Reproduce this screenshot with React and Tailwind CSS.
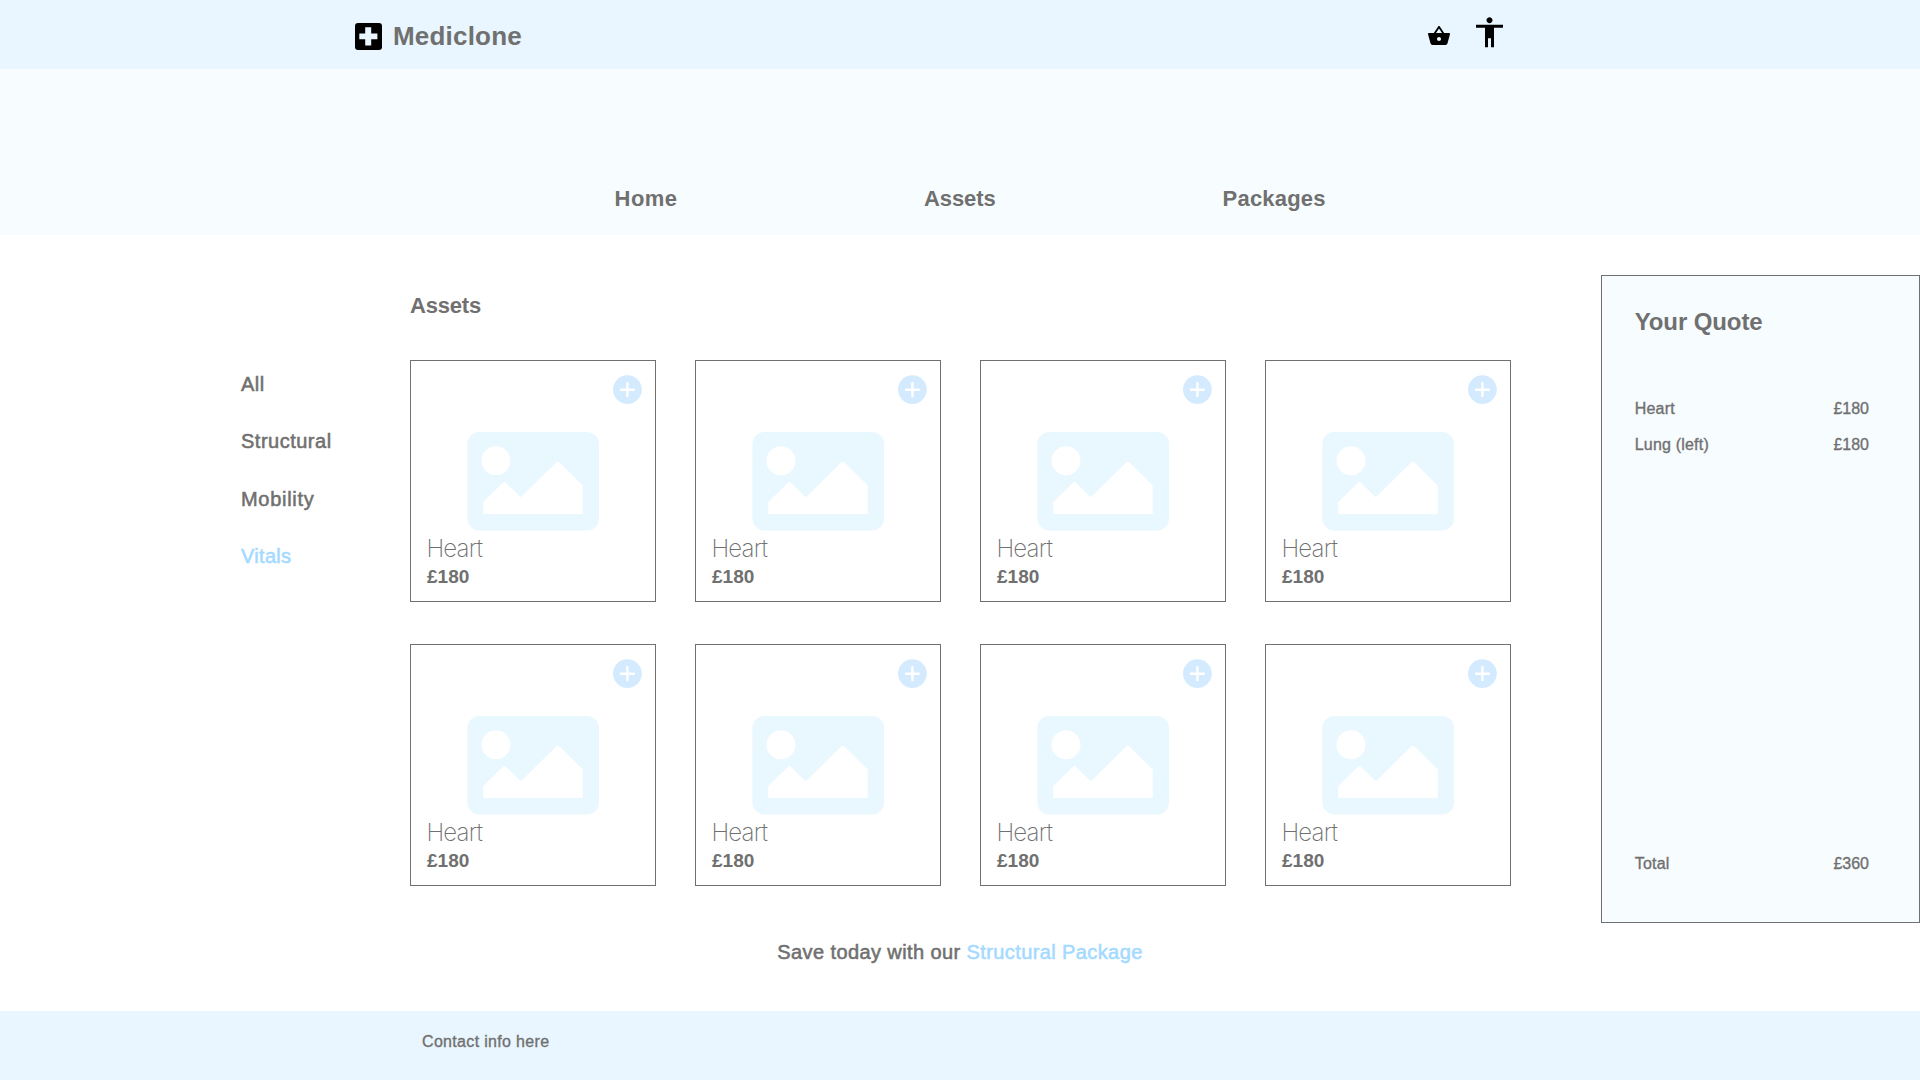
const categories = [
  { label: "All" },
  { label: "Structural" },
  { label: "Mobility", className: "tracking-[0.7px]" },
  { label: "Vitals", className: "tracking-[0.3px] text-[#a4daff]" },
];
const assets = Array.from({ length: 8 }, (_, id) => ({ id, name: "Heart", price: "£180" }));
const quote = [
  { name: "Heart", price: "£180" },
  { name: "Lung (left)", price: "£180" },
];

function LogoIcon() {
  return (
    <svg className="h-[27px] w-[27px]" viewBox="0 0 27 27">
      <rect width="27" height="27" rx="3" fill="#000" />
      <path d="M10.2 4.3h6v6.3h6.2v5.6h-6.2v6.3h-6v-6.3H4.3v-5.6h5.9z" fill="#e9f6ff" />
    </svg>
  );
}

function BasketIcon() {
  return (
    <svg className="h-6 w-6" viewBox="0 0 24 24">
      <path d="M17.21 9l-4.38-6.56c-.19-.28-.51-.42-.83-.42-.32 0-.64.14-.83.43L6.79 9H2c-.55 0-1 .45-1 1 0 .09.01.18.04.27l2.54 9.27c.23.84 1 1.46 1.92 1.46h13c.92 0 1.69-.62 1.93-1.46l2.54-9.27L23 10c0-.55-.45-1-1-1h-4.79zM9 9l3-4.4L15 9H9zm3 8c-1.1 0-2-.9-2-2s.9-2 2-2 2 .9 2 2-.9 2-2 2z" />
    </svg>
  );
}

function PersonIcon() {
  return (
    <svg className="h-9 w-9" viewBox="0 0 24 24">
      <path
        transform="translate(-0.33 0.2)"
        d="M12 2c1.1 0 2 .9 2 2s-.9 2-2 2-2-.9-2-2 .9-2 2-2zm9 7h-6v13h-2v-6h-2v6H9V9H3V7h18v2z"
      />
    </svg>
  );
}

function PictureIcon() {
  return (
    <svg className="mt-[71px] ml-14 h-[99px] w-[132px]" viewBox="0 0 132 99">
      <rect x="0.4" y="0" width="131.6" height="98.6" rx="12" fill="#e9f7ff" />
      <circle cx="29" cy="28.8" r="14.5" fill="#fff" />
      <path
        d="M16.2 82V70L35.7 50.9Q37.4 49.3 39.1 50.9L53.8 65.3L89.1 30.6Q90.8 29 92.5 30.6L115.7 53.5V82Z"
        fill="#fff"
      />
    </svg>
  );
}

function AddButton() {
  return (
    <button className="absolute top-3.5 right-3" aria-label="Add">
      <svg className="h-[30px] w-[30px]" viewBox="0 0 30 30">
        <circle cx="14.4" cy="14.6" r="14.4" fill="#d4ebff" />
        <path d="M14.4 8.3v12.8M8 14.7h12.8" stroke="#fff" strokeWidth="2.4" strokeLinecap="round" />
      </svg>
    </button>
  );
}

function AssetCard({ name, price }) {
  return (
    <article className="relative h-[242px] w-[246px] border border-[#707070] bg-white">
      <AddButton />
      <PictureIcon />
      <h3 className="mt-1 pl-[15.4px] font-['Inter','Liberation_Sans',sans-serif] text-[24px] leading-[28px] font-extralight tracking-[-0.8px]">
        {name}
      </h3>
      <p className="mt-[3px] pl-4 text-[19px] leading-[22px] font-bold">{price}</p>
    </article>
  );
}

function QuoteLine({ name, price }) {
  return (
    <div className="flex justify-between text-[16px] leading-9 [-webkit-text-stroke:0.35px]">
      <span className="tracking-[0.2px]">{name}</span>
      <span>{price}</span>
    </div>
  );
}

export default function App() {
  return (
    <div className="flex h-[1080px] w-[1920px] flex-col overflow-hidden bg-white font-['Liberation_Sans',Arial,sans-serif] text-[#707070]">
      <header className="flex h-[69px] items-center bg-[#e9f6ff] pt-[3px] pl-[355px]">
        <LogoIcon />
        <span className="ml-[11px] w-[1034px] text-[26px] leading-[30px] font-bold tracking-[0.2px]">Mediclone</span>
        <div className="flex items-center gap-[21px] pb-2 text-black">
          <span className="pt-2">
            <BasketIcon />
          </span>
          <PersonIcon />
        </div>
      </header>

      <nav className="flex h-[166px] items-end bg-[#f7fcff] pb-[23px] pl-[614.6px] text-[22px] leading-[26px] font-bold">
        <a className="w-[309.4px] tracking-[0.4px]">Home</a>
        <a className="w-[298.6px] tracking-[-0.1px]">Assets</a>
        <a className="tracking-[0.2px]">Packages</a>
      </nav>

      <main className="flex h-[776px]">
        <aside className="flex w-[410px] flex-col pt-[121px] pl-[241px] text-[20px] leading-[57.33px] tracking-[0.5px] [-webkit-text-stroke:0.55px]">
          {categories.map((c) => (
            <a key={c.label} className={c.className}>
              {c.label}
            </a>
          ))}
        </aside>

        <section className="w-[1101px] pt-[58px]">
          <h1 className="text-[22px] leading-[26px] font-bold tracking-[-0.2px]">Assets</h1>
          <div className="mt-[41px] grid grid-cols-[repeat(4,246px)] gap-x-[39px] gap-y-[42px]">
            {assets.map((a) => (
              <AssetCard key={a.id} name={a.name} price={a.price} />
            ))}
          </div>
          <p className="mt-[54px] pr-[1px] text-center text-[20px] leading-6 tracking-[0.4px] [-webkit-text-stroke:0.55px]">
            Save today with our <a className="text-[#a4daff]">Structural Package</a>
          </p>
        </section>

        <aside className="mt-10 ml-[90px] flex h-[648px] w-[319px] flex-col border border-[#707070] bg-[#f7fcff] pt-8 pr-[50px] pb-10 pl-[32.7px]">
          <h2 className="mb-[55px] text-[24px] leading-7 font-bold tracking-[-0.1px]">Your Quote</h2>
          {quote.map((q) => (
            <QuoteLine key={q.name} name={q.name} price={q.price} />
          ))}
          <div className="mt-auto">
            <QuoteLine name="Total" price="£360" />
          </div>
        </aside>
      </main>

      <footer className="flex-1 bg-[#e9f6ff] pt-[21px] pl-[422px] text-[16px] leading-5 tracking-[0.33px] [-webkit-text-stroke:0.35px]">
        Contact info here
      </footer>
    </div>
  );
}
